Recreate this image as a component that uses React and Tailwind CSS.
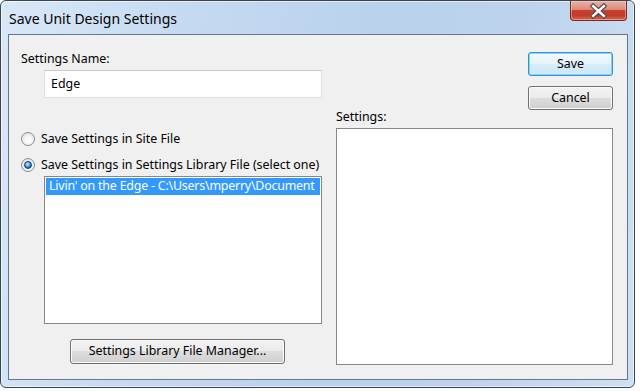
import clsx from 'clsx'

function Radio({ checked }) {
  return (
    <span className="flex h-[14px] w-[14px] shrink-0 items-center justify-center rounded-full border border-[#8a8c8e] bg-[radial-gradient(circle_at_55%_60%,#ffffff_0%,#f4f4f4_40%,#d2d3d4_100%)]">
      {checked && (
        <span className="h-[8px] w-[8px] rounded-full border border-[#123e66] bg-[radial-gradient(circle_at_40%_35%,#d6f1ff_0%,#5fb4ea_35%,#1d6fb4_70%,#0d3f6e_100%)]" />
      )}
    </span>
  )
}

function Button({ children, isDefault, className }) {
  return (
    <button
      className={clsx(
        'flex items-center justify-center rounded-[3px] border text-[12.4px] leading-none text-black',
        isDefault
          ? 'border-[#3b8fd0] bg-[linear-gradient(#f2f9fe_0%,#e6f4fc_50%,#d6edfa_50%,#cbe7f8_100%)] shadow-[inset_0_0_0_1px_#86d5f7]'
          : 'border-[#707070] bg-[linear-gradient(#f2f2f2_0%,#ebebeb_50%,#dddddd_50%,#cfcfcf_100%)] shadow-[inset_0_0_0_1px_#fbfbfb]',
        className
      )}
    >
      {children}
    </button>
  )
}

function CloseGlyph() {
  return (
    <svg width="57" height="20" viewBox="0 0 57 20">
      <path d="M23 5 L34 15 M34 5 L23 15" stroke="#505050" strokeWidth="5" strokeLinecap="square" fill="none" />
      <path d="M23 5 L34 15 M34 5 L23 15" stroke="#ffffff" strokeWidth="2.6" strokeLinecap="square" fill="none" />
    </svg>
  )
}

export default function App() {
  return (
    <div className="h-[391px] w-[643px] bg-white font-['Noto_Sans','Open_Sans',sans-serif] text-black">
      <div className="flex h-[388px] w-[635px] flex-col rounded-[6px] border border-[#3a4552] bg-[linear-gradient(100deg,#d9e8f7_0%,#c6dbf1_25%,#b9d1eb_55%,#bdd3ec_75%,#cde0f3_100%)] pb-[7px] pl-[7px] pr-[6px] shadow-[inset_0_0_0_1px_rgba(255,255,255,0.55)]">
        {/* title bar */}
        <div className="flex h-[33px] items-start justify-between">
          <span className="ml-[1px] mt-[8px] text-[14px] leading-[20px]">Save Unit Design Settings</span>
          <div className="mr-[1px] flex h-[20px] w-[57px] items-center justify-center rounded-b-[4px] border border-t-0 border-[#7a2a20] bg-[linear-gradient(#eab0a4_0%,#dd8a7a_45%,#c9412e_50%,#c23b28_75%,#d5664c_100%)] shadow-[inset_0_0_0_1px_rgba(255,220,210,0.45)]">
            <CloseGlyph />
          </div>
        </div>

        {/* client area */}
        <div className="flex h-[346px] border border-[#67768a] bg-[#f0f0f0] pl-[12px] pt-[16px] text-[12.4px]">
          <div className="flex w-[301px] flex-col">
            <span className="h-[16px] leading-[16px]">Settings Name:</span>
            <div className="ml-[23px] mt-[3px] flex h-[28px] w-[278px] items-center border border-[#dcdfe4] border-t-[#c5c8cd] bg-white pl-[6px]">
              Edge
            </div>

            <label className="mt-[33px] flex h-[16px] items-center gap-[6px]">
              <Radio />
              <span>Save Settings in Site File</span>
            </label>
            <label className="mt-[10px] flex h-[16px] items-center gap-[6px]">
              <Radio checked />
              <span>Save Settings in Settings Library File (select one)</span>
            </label>

            <div className="ml-[23px] mt-[3px] h-[148px] w-[278px] overflow-hidden border border-[#828790] bg-white p-[1px]">
              <div className="flex h-[17px] items-center whitespace-nowrap bg-[#3399ff] pl-[3px] text-white tracking-[-0.2px]">
                Livin' on the Edge - C:\Users\mperry\Document
              </div>
            </div>

            <Button className="ml-[49px] mt-[15px] h-[25px] w-[215px]">Settings Library File Manager...</Button>
          </div>

          <div className="ml-[14px] flex w-[277px] flex-col">
            <Button isDefault className="ml-auto mt-[1px] h-[24px] w-[85px]">
              Save
            </Button>
            <Button className="ml-auto mt-[10px] h-[24px] w-[85px]">Cancel</Button>
            <span className="h-[14px] leading-[14px]">Settings:</span>
            <div className="mt-[4px] h-[237px] border border-[#828790] bg-white" />
          </div>
        </div>
      </div>
    </div>
  )
}
